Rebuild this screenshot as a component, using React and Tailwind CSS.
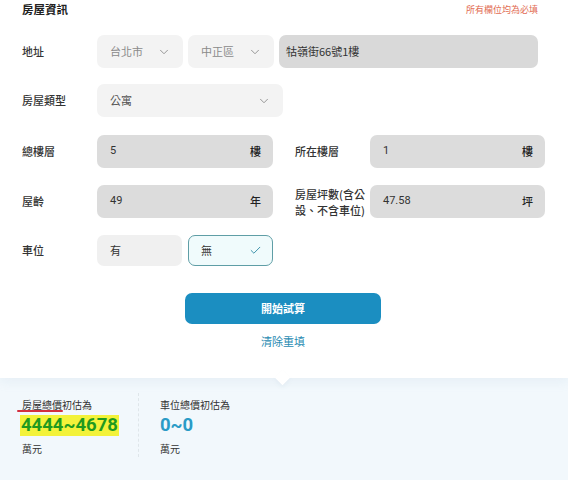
import { ChevronDown, Check } from 'lucide-react';

const font = { fontFamily: '"Noto Sans CJK TC", "Noto Sans", sans-serif' };

function Select({ value, className }) {
  return (
    <div className={`h-[33px] rounded-[7px] bg-[#f3f3f3] flex items-center justify-between pl-[13px] pr-[12px] text-[11px] text-[#8a8a8a] ${className}`}>
      <span>{value}</span>
      <ChevronDown size={14} strokeWidth={1.6} className="text-[#8f8f8f]" />
    </div>
  );
}

function UnitInput({ value, unit, className }) {
  return (
    <div className={`h-[33px] rounded-[7px] bg-[#dcdcdc] flex items-center justify-between pl-[13px] pr-[12px] text-[11px] text-[#333] ${className}`}>
      <span style={{ fontFamily: 'Roboto, "Noto Sans CJK TC", sans-serif' }}>{value}</span>
      <span className="font-medium text-[#222]">{unit}</span>
    </div>
  );
}

function Label({ children, className = '' }) {
  return <div className={`w-[75px] shrink-0 text-[11px] font-medium text-[#333] ${className}`}>{children}</div>;
}

export default function App() {
  return (
    <div className="w-[568px] h-[480px] bg-white overflow-hidden flex flex-col" style={font}>
      <div className="relative bg-white shadow-[0_4px_10px_rgba(160,190,210,0.14)] z-10 px-[22px] h-[378px]">
        <div className="flex items-center justify-between h-[20px] pr-[8px]">
          <span className="text-[11.5px] font-bold text-[#222]">房屋資訊</span>
          <span className="text-[9px] text-[#e26b52]">所有欄位均為必填</span>
        </div>

        <div className="mt-[15px] flex flex-col gap-[17px]">
          <div className="flex items-center">
            <Label>地址</Label>
            <div className="flex gap-[5px]">
              <Select value="台北市" className="w-[86px]" />
              <Select value="中正區" className="w-[86px]" />
              <div className="w-[259px] h-[33px] rounded-[7px] bg-[#d9d9d9] flex items-center pl-[7px] text-[11px] text-[#333]">
                牯嶺街66號1樓
              </div>
            </div>
          </div>

          <div className="flex items-center -mt-[1px]">
            <Label>房屋類型</Label>
            <Select value="公寓" className="w-[186px] !text-[#555]" />
          </div>

          <div className="flex items-center mt-[1px]">
            <Label>總樓層</Label>
            <UnitInput value="5" unit="樓" className="w-[176px]" />
            <Label className="ml-[22px]">所在樓層</Label>
            <UnitInput value="1" unit="樓" className="w-[175px]" />
          </div>

          <div className="flex items-center">
            <Label>屋齡</Label>
            <UnitInput value="49" unit="年" className="w-[176px]" />
            <Label className="ml-[22px] leading-[16px]">房屋坪數(含公<br />設、不含車位)</Label>
            <UnitInput value="47.58" unit="坪" className="w-[175px]" />
          </div>

          <div className="flex items-center">
            <Label>車位</Label>
            <div className="flex gap-[6px]">
              <div className="w-[85px] h-[31px] rounded-[7px] bg-[#f0f0f0] flex items-center pl-[13px] text-[11px] text-[#333]">有</div>
              <div className="w-[85px] h-[31px] rounded-[7px] bg-[#f0fbfc] border border-[#5f9ea6] flex items-center justify-between pl-[12px] pr-[10px] text-[11px] text-[#333]">
                <span>無</span>
                <Check size={13} strokeWidth={1.8} className="text-[#3a8fa8]" />
              </div>
            </div>
          </div>
        </div>

        <div className="mt-[27px] flex flex-col items-center">
          <button className="w-[196px] h-[31px] rounded-[7px] bg-[#1b8ec1] text-white text-[11px] font-bold ml-[-2px]">開始試算</button>
          <span className="mt-[9px] text-[11px] text-[#2a8bb2] ml-[-2px]">清除重填</span>
        </div>

        <div className="absolute left-[277px] -bottom-[5px] w-[11px] h-[11px] bg-white rotate-45 shadow-[2px_2px_4px_rgba(160,190,210,0.1)]" />
      </div>

      <div className="flex-1 bg-[#f2f8fc] flex pl-[22px] pt-[19px]">
        <div className="w-[116px] flex flex-col">
          <span className="text-[10px] text-[#333] relative w-fit">
            房屋總價初估為
            <span className="absolute left-[-5px] top-[13px] w-[46px] h-[1.5px] bg-[#d3303f] rounded-full" />
          </span>
          <span className="mt-[3px] text-[18.5px] leading-[21px] font-bold text-[#1f9a1f] bg-[#f3f23a] w-fit px-[1px] -ml-[2px]" style={{ fontFamily: 'Roboto, sans-serif' }}>4444~4678</span>
          <span className="mt-[5px] text-[10px] text-[#333]">萬元</span>
        </div>
        <div className="w-0 h-[64px] mt-[-4px] border-l border-dashed border-[#dfe6ea]" />
        <div className="pl-[21px] flex flex-col">
          <span className="text-[10px] text-[#333]">車位總價初估為</span>
          <span className="mt-[3px] text-[18.5px] leading-[21px] font-bold text-[#2a9bc6]" style={{ fontFamily: 'Roboto, sans-serif' }}>0~0</span>
          <span className="mt-[5px] text-[10px] text-[#333]">萬元</span>
        </div>
      </div>
    </div>
  );
}
